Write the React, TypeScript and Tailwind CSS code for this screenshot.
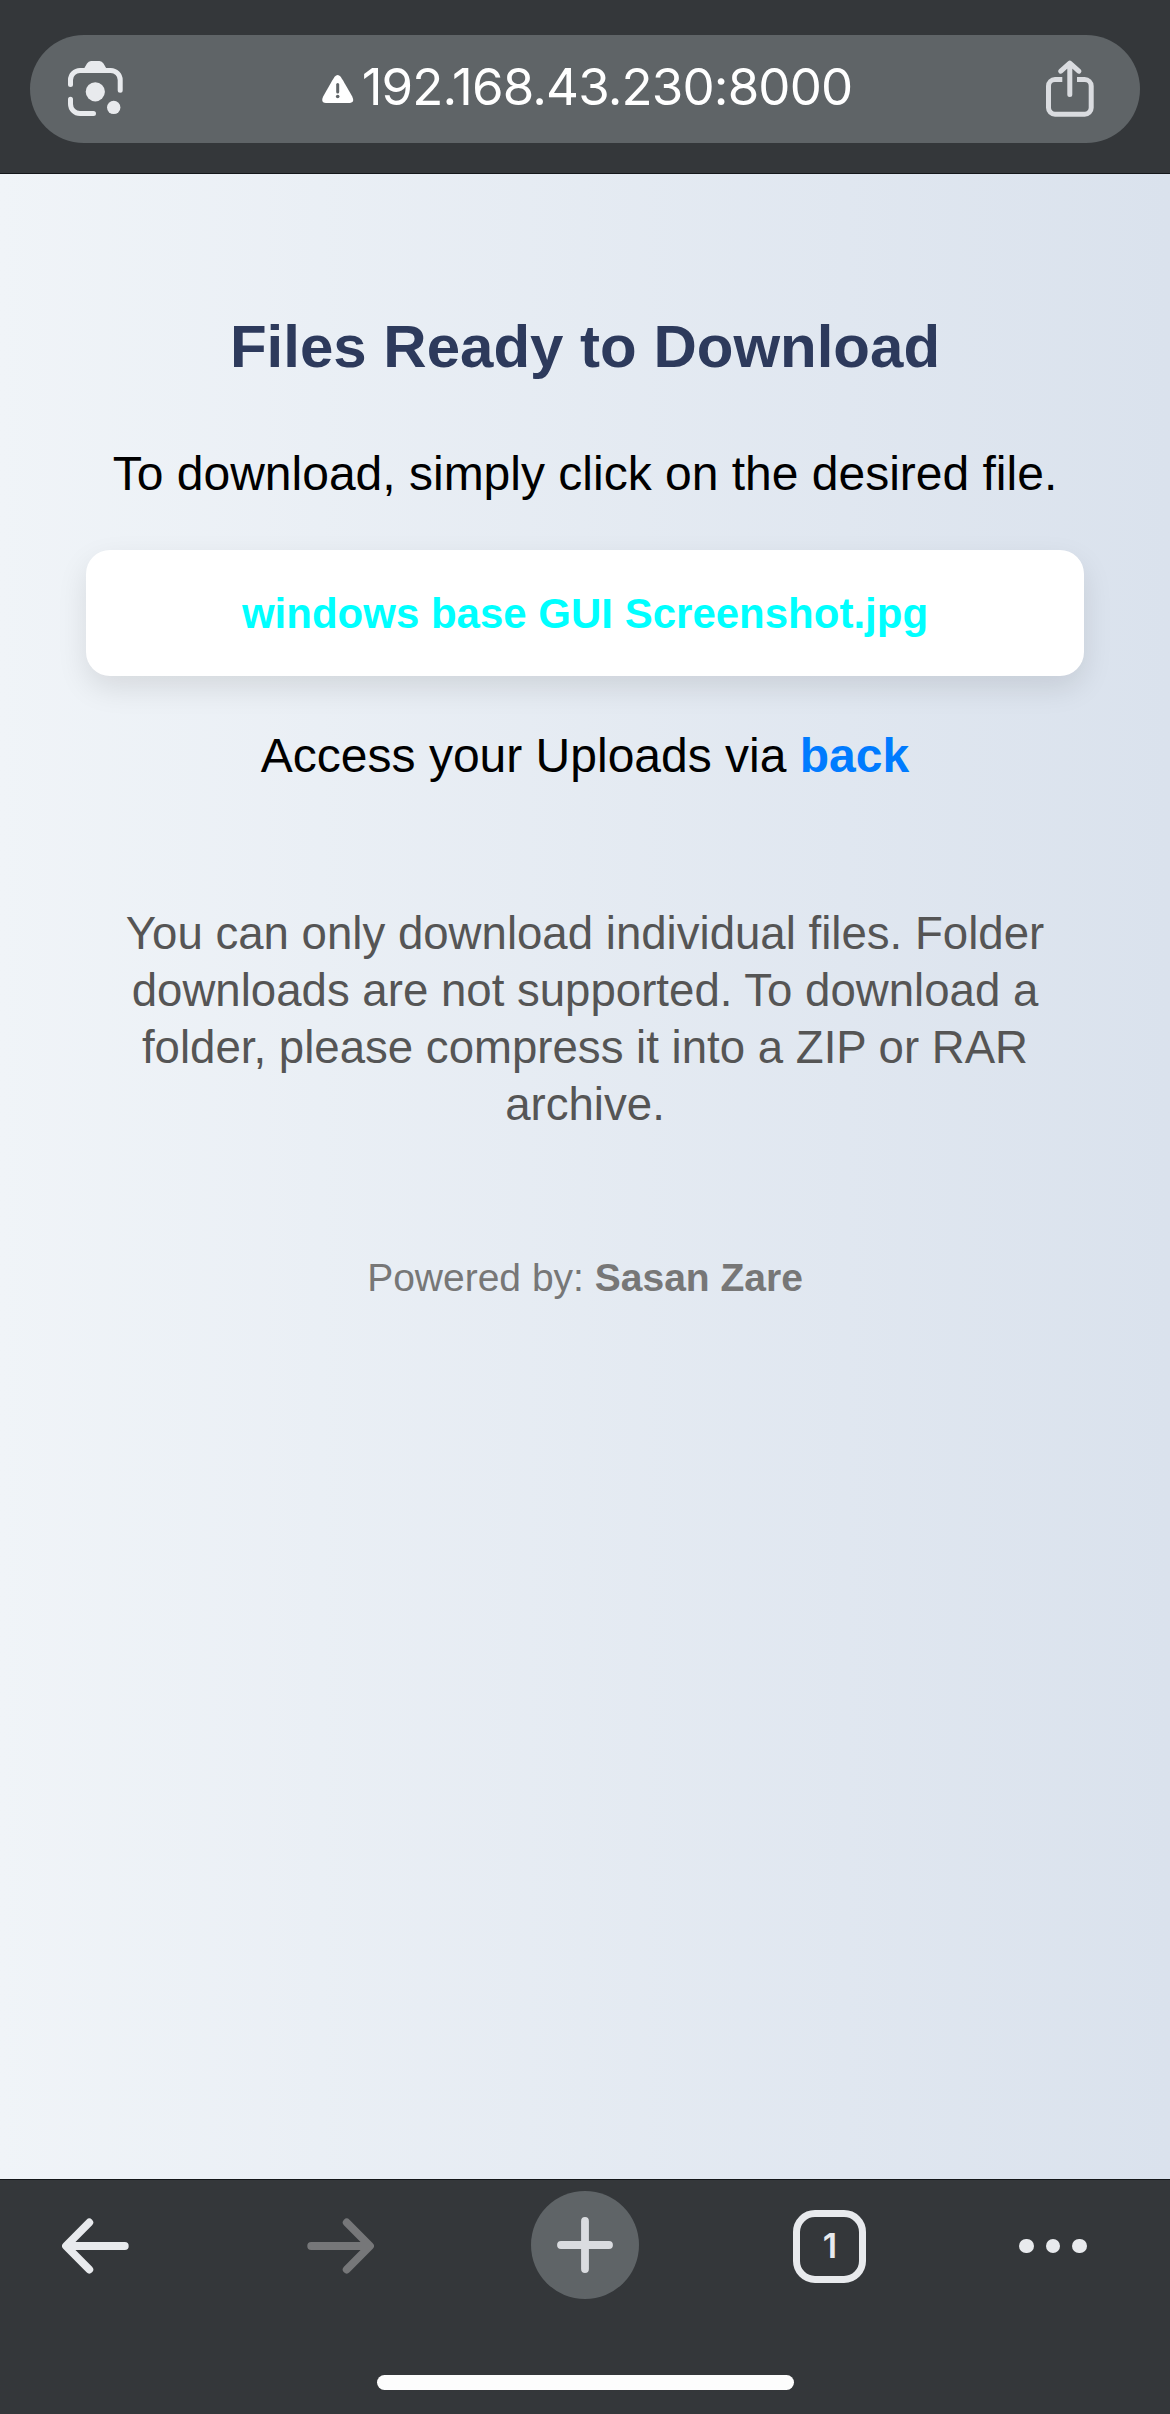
function LensIcon() {
  return (
    <svg className="h-[56px] w-[56px] shrink-0" viewBox="68 61 56 56" fill="none" stroke="#e8eaed" strokeWidth="5" strokeLinecap="round">
      <path d="M70.5 84.5V80A9.5 9.5 0 0 1 80 70.5H110.7A9.5 9.5 0 0 1 120.2 80V90.3" />
      <path d="M70.5 99.2V104A9.5 9.5 0 0 0 80 113.5H93.5" />
      <path d="M83.8 69L87 63.6Q88.5 61 91 61H99.500Q102 61 103.500 63.6L106.700 69Z" fill="#e8eaed" stroke="none" />
      <circle cx="95.300" cy="91.800" r="9.600" fill="#e8eaed" stroke="none" />
      <circle cx="113.700" cy="107.400" r="6.700" fill="#e8eaed" stroke="none" />
    </svg>
  );
}

function WarningIcon() {
  return (
    <svg className="mr-2 h-[28px] w-[32px] shrink-0" viewBox="0 0 32 28">
      <path d="M12.600 1.800Q15.600 -1.600 18.700 1.800Q20 3.600 30.200 21.500Q33 27.500 28 28H4Q-1.700 27.500 1.200 21.500Q11.300 3.600 12.600 1.800Z" fill="#fff" />
      <path d="M15.700 9.500V17" stroke="#5f6467" strokeWidth="3" strokeLinecap="round" />
      <circle cx="15.700" cy="21.500" r="1.800" fill="#5f6467" />
    </svg>
  );
}

function ShareIcon() {
  return (
    <svg className="h-[58px] w-[48px] shrink-0" viewBox="1046 61 48 58" fill="none" stroke="#dadce0" strokeWidth="5">
      <path d="M1062.300 80.500H1055A6.500 6.500 0 0 0 1048.500 87V108.700A6.500 6.500 0 0 0 1055 115.200H1084.700A6.500 6.500 0 0 0 1091.200 108.700V87A6.500 6.500 0 0 0 1084.700 80.500H1077" />
      <path d="M1069.800 64.500V95.500M1060.800 72.200L1069.800 64L1078.800 72.200" strokeLinecap="round" strokeLinejoin="round" />
    </svg>
  );
}

function Arrow({ color, forward = false }: { color: string; forward?: boolean }) {
  return (
    <svg className={forward ? "h-[56px] w-[67px] rotate-180" : "h-[56px] w-[67px]"} viewBox="0 0 67 56" fill="none" stroke={color} strokeWidth="7.800" strokeLinecap="round" strokeLinejoin="round">
      <path d="M62.800 28H5M27.300 4.500L4 28L27.300 51.500" />
    </svg>
  );
}

function BottomBar() {
  return (
    <footer className="flex h-[235px] flex-col border-t border-[#14171a] bg-[#34373a]">
      <div className="flex h-[132px] items-center pl-[62px]">
        <Arrow color="#e8eaed" />
        <div className="ml-[178px] flex">
          <Arrow color="#767779" forward />
        </div>
        <div className="mb-0.5 ml-[157px] flex size-[108px] items-center justify-center rounded-full bg-[#5f6467]">
          <svg className="size-[56px]" viewBox="0 0 56 56" stroke="#dadce0" strokeWidth="7.800" strokeLinecap="round">
            <path d="M28 4V52M4 28H52" />
          </svg>
        </div>
        <div className="ml-[154px] flex size-[73px] items-center justify-center rounded-[22px] border-[7px] border-[#e8eaed] pl-px font-['Inter',sans-serif] text-[34px] leading-none font-semibold text-[#e8eaed]">
          1
        </div>
        <div className="ml-[153px] flex gap-[12px]">
          <span className="size-[14.5px] rounded-full bg-[#e8eaed]" />
          <span className="size-[14.5px] rounded-full bg-[#e8eaed]" />
          <span className="size-[14.5px] rounded-full bg-[#e8eaed]" />
        </div>
      </div>
      <div className="mx-auto mt-[63px] h-[15px] w-[417px] rounded-full bg-[#fdfdfd]" />
    </footer>
  );
}

export default function App() {
  return (
    <div className="flex h-[2414px] w-[1170px] flex-col overflow-hidden font-['Liberation_Sans',sans-serif]">
      <header className="h-[174px] border-b border-[#14171a] bg-[#34373a] px-[30px] pt-[35px]">
        <div className="flex h-[108px] items-center justify-between rounded-[54px] bg-[#5f6467] pr-[46px] pl-[38px]">
          <LensIcon />
          <div className="flex items-center pl-1">
            <WarningIcon />
            <span className="mb-[5px] font-['Inter',sans-serif] text-[51px] leading-[60px] tracking-[-0.85px] text-white">192.168.43.230:8000</span>
          </div>
          <ShareIcon />
        </div>
      </header>
      <main className="flex-1 bg-linear-to-r from-[#f0f4f8] to-[#dae2ed] px-[86px] pt-[137px] text-center text-black">
        <h1 className="text-[60px] leading-[72px] font-bold text-[#2d3a5c]">Files Ready to Download</h1>
        <p className="mt-[63px] text-[48px] leading-[56px] whitespace-nowrap">To download, simply click on the desired file.</p>
        <div className="mt-[48px] flex h-[126px] items-center justify-center rounded-[24px] bg-white text-[42px] font-bold text-[#00ffff] shadow-[0_12px_30px_rgba(0,0,0,0.1)]">
          windows base GUI Screenshot.jpg
        </div>
        <p className="mt-[52px] text-[48px] leading-[56px]">
          Access your Uploads via <a className="font-bold text-[#007bff]">back</a>
        </p>
        <p className="mt-[121px] text-[45.6px] leading-[57px] text-[#555]">
          You can only download individual files. Folder
          <br />
          downloads are not supported. To download a
          <br />
          folder, please compress it into a ZIP or RAR
          <br />
          archive.
        </p>
        <p className="mt-[122px] text-[39px] leading-[46px] text-[#777]">
          Powered by: <b>Sasan Zare</b>
        </p>
      </main>
      <BottomBar />
    </div>
  );
}
